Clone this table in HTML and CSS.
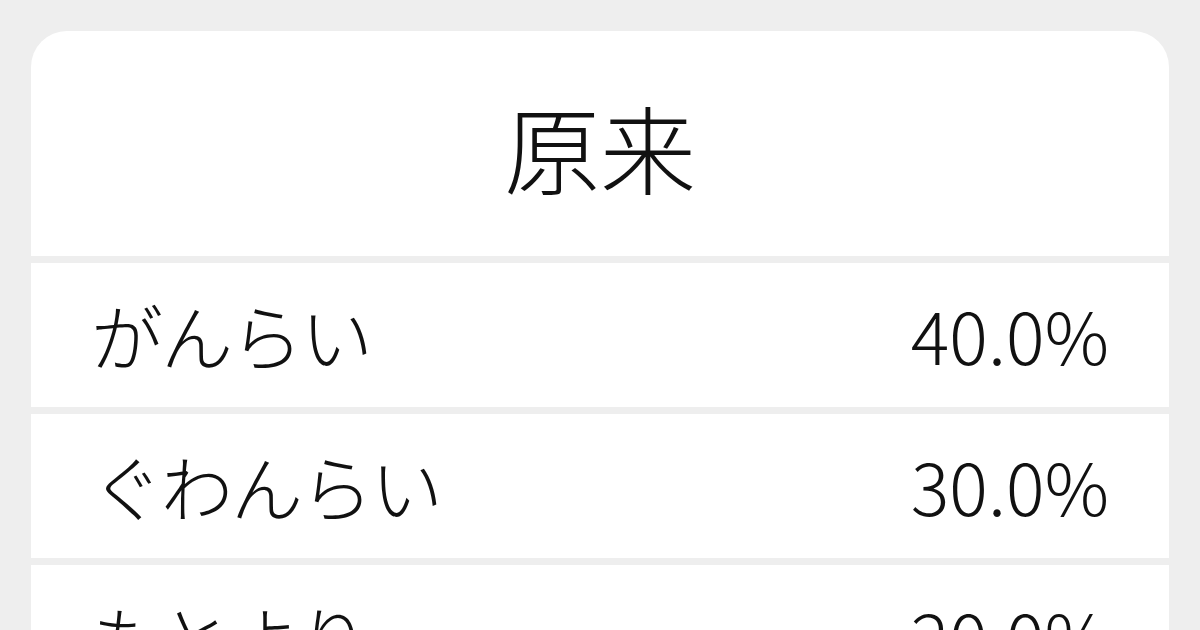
FILE: index.html
```html
<!DOCTYPE html>
<html lang="ja">
<head>
<meta charset="utf-8">
<link rel="stylesheet" href="styles.css">
</head>
<body>
<div class="card">
  <div class="head"><h1 class="title">原来</h1></div>
  <div class="row"><span class="reading">がんらい</span><span class="pct">40.0%</span></div>
  <div class="row"><span class="reading">ぐわんらい</span><span class="pct">30.0%</span></div>
  <div class="row"><span class="reading">もとより</span><span class="pct">20.0%</span></div>
</div>
</body>
</html>
```
FILE: styles.css
```css
html, body {
  margin: 0;
  padding: 0;
  background: #eeeeee;
  overflow: hidden;
}
body {
  font-family: "Noto Sans CJK JP", "Noto Sans", sans-serif;
  font-weight: 300;
  color: #111111;
  padding: 31px 31px 0 31px;
  height: 630px;
  box-sizing: border-box;
}
.card {
  display: flex;
  flex-direction: column;
  gap: 7px;
  background: #eeeeee;
  border-radius: 36px;
  overflow: hidden;
}
.head {
  height: 225px;
  background: #ffffff;
  display: flex;
  align-items: center;
  justify-content: center;
}
.title {
  margin: 0;
  font-size: 96px;
  font-weight: 300;
  line-height: 1;
  padding-top: 4px;
}
.row {
  height: 144px;
  box-sizing: border-box;
  background: #ffffff;
  display: flex;
  align-items: center;
  justify-content: space-between;
  padding: 0 60px 3px 60px;
  font-size: 72px;
  line-height: 1;
}
.reading {
  letter-spacing: -2px;
}
```
